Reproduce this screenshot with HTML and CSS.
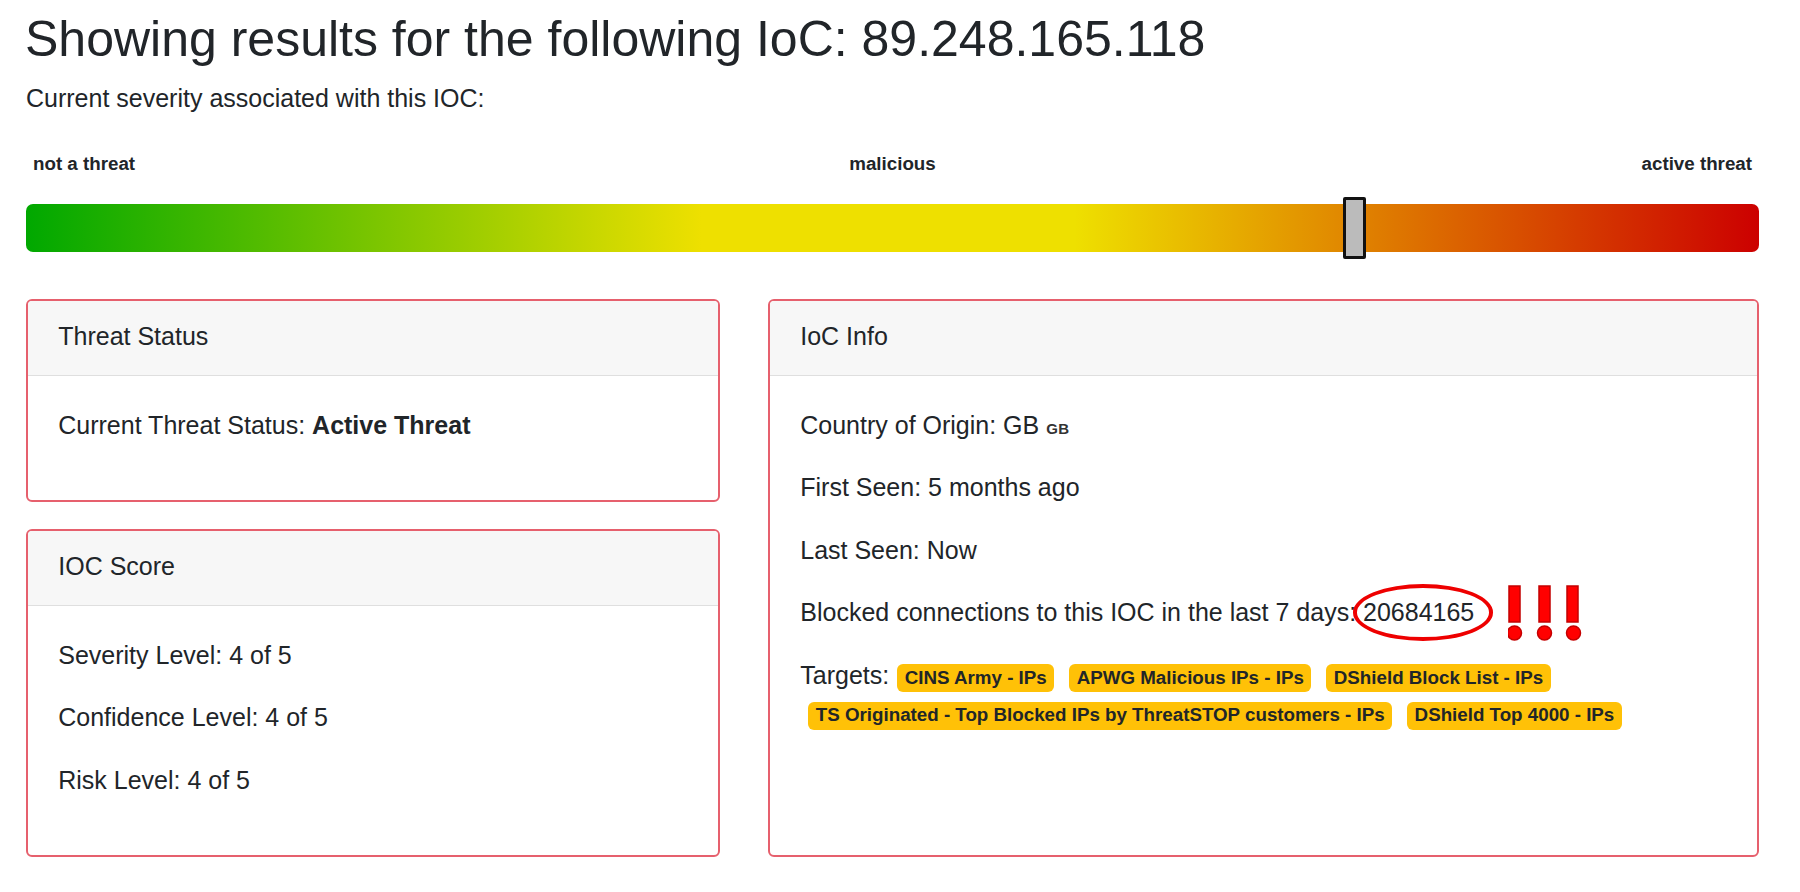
FILE: index.html
```html
<!DOCTYPE html>
<html lang="en">
<head>
<meta charset="utf-8">
<title>IoC Results</title>
<link rel="stylesheet" href="styles.css">
</head>
<body>
<main class="page">
  <h1 class="title">Showing results for the following IoC: 89.248.165.118</h1>
  <p class="lead">Current severity associated with this IOC:</p>

  <div class="scale-labels">
    <span class="lbl lbl-left">not a threat</span>
    <span class="lbl lbl-mid">malicious</span>
    <span class="lbl lbl-right">active threat</span>
  </div>
  <div class="scale-bar">
    <div class="scale-handle" style="left: 76%"></div>
  </div>

  <div class="cards">
    <div class="col-left">
      <section class="card card-status">
        <header class="card-header">Threat Status</header>
        <div class="card-body">
          <p>Current Threat Status: <strong>Active Threat</strong></p>
        </div>
      </section>
      <section class="card card-score">
        <header class="card-header">IOC Score</header>
        <div class="card-body">
          <p>Severity Level: 4 of 5</p>
          <p>Confidence Level: 4 of 5</p>
          <p>Risk Level: 4 of 5</p>
        </div>
      </section>
    </div>
    <section class="card card-info">
      <header class="card-header">IoC Info</header>
      <div class="card-body">
        <p>Country of Origin: GB <small class="flag">GB</small></p>
        <p>First Seen: 5 months ago</p>
        <p>Last Seen: Now</p>
        <p>Blocked connections to this IOC in the last 7 days: <span class="annot">20684165<svg class="bangs" width="80" height="64" viewBox="0 0 80 64" aria-hidden="true">
          <g fill="#ff0000" stroke="#c40000" stroke-width="1.5">
            <rect x="1" y="1" width="11" height="36"/>
            <circle cx="6.5" cy="48" r="7"/>
            <rect x="31" y="1" width="11" height="36"/>
            <circle cx="36.5" cy="48" r="7"/>
            <rect x="59" y="1" width="11" height="36"/>
            <circle cx="65.5" cy="48" r="7"/>
          </g>
        </svg></span></p>
        <p class="targets">Targets:<span class="badge">CINS Army - IPs</span> <span class="badge">APWG Malicious IPs - IPs</span> <span class="badge">DShield Block List - IPs</span> <span class="badge">TS Originated - Top Blocked IPs by ThreatSTOP customers - IPs</span> <span class="badge">DShield Top 4000 - IPs</span></p>
      </div>
    </section>
  </div>
</main>
</body>
</html>
```

FILE: styles.css
```css
* { box-sizing: border-box; }

html, body {
  margin: 0;
  padding: 0;
  background: #ffffff;
}

body {
  font-family: "Liberation Sans", Arial, Helvetica, sans-serif;
  color: #212529;
  font-size: 25px;
  line-height: 37.5px;
}

.page {
  width: 1733px;
  margin-left: 26px;
  padding-top: 9px;
}

.title {
  margin: 0;
  font-size: 50px;
  line-height: 60px;
  font-weight: 400;
  color: #212529;
  margin-left: -1px;
}

.lead {
  margin: 11px 0 0 0;
  font-size: 25px;
  line-height: 37.5px;
}

.scale-labels {
  display: grid;
  grid-template-columns: 1fr auto 1fr;
  padding: 0 7px;
  margin-top: 32px;
  font-size: 18.75px;
  line-height: 28px;
  font-weight: 700;
}

.lbl-left { justify-self: start; }
.lbl-mid { justify-self: center; }
.lbl-right { justify-self: end; }

.scale-bar {
  position: relative;
  height: 48px;
  margin-top: 26px;
  border-radius: 7px;
  background: linear-gradient(to right, #00a800 0%, #eee000 39%, #eee000 60.5%, #cc0000 100%);
}

.scale-handle {
  position: absolute;
  top: -7px;
  width: 23px;
  height: 62px;
  background: #bbbbbb;
  border: 3px solid #111111;
  border-radius: 2px;
}

.cards {
  display: grid;
  grid-template-columns: 694px 1fr;
  column-gap: 48px;
  margin-top: 47px;
}

.col-left {
  display: flex;
  flex-direction: column;
  gap: 27px;
}

.card {
  border: 2px solid #e6606d;
  border-radius: 6px;
  background: #ffffff;
}

.card-header {
  padding: 17px 30.25px 19.5px;
  background: #f7f7f7;
  border-bottom: 1px solid #dfdfdf;
  border-radius: 4px 4px 0 0;
  font-size: 25px;
  line-height: 37.5px;
}

.card-body {
  padding: 31.25px 30.25px 30.25px;
}

.card-body p {
  margin: 0 0 25px 0;
}

.card-body strong {
  font-weight: 700;
}

.flag {
  font-size: 15px;
  line-height: 1;
  font-weight: 700;
  color: #333;
  letter-spacing: 0.3px;
}

.annot {
  position: relative;
  display: inline-block;
}

.annot::before {
  content: "";
  position: absolute;
  left: -10px;
  right: -19px;
  top: -10px;
  bottom: -9px;
  border: 4px solid #ee0000;
  border-radius: 50%;
}

.bangs {
  position: absolute;
  left: 145px;
  top: -9px;
}

.badge {
  display: inline-block;
  margin-left: 8px;
  padding: 4.7px 7.5px;
  font-size: 18.75px;
  line-height: 1;
  font-weight: 700;
  color: #212529;
  background: #ffc107;
  border-radius: 6px;
  white-space: nowrap;
}
```
